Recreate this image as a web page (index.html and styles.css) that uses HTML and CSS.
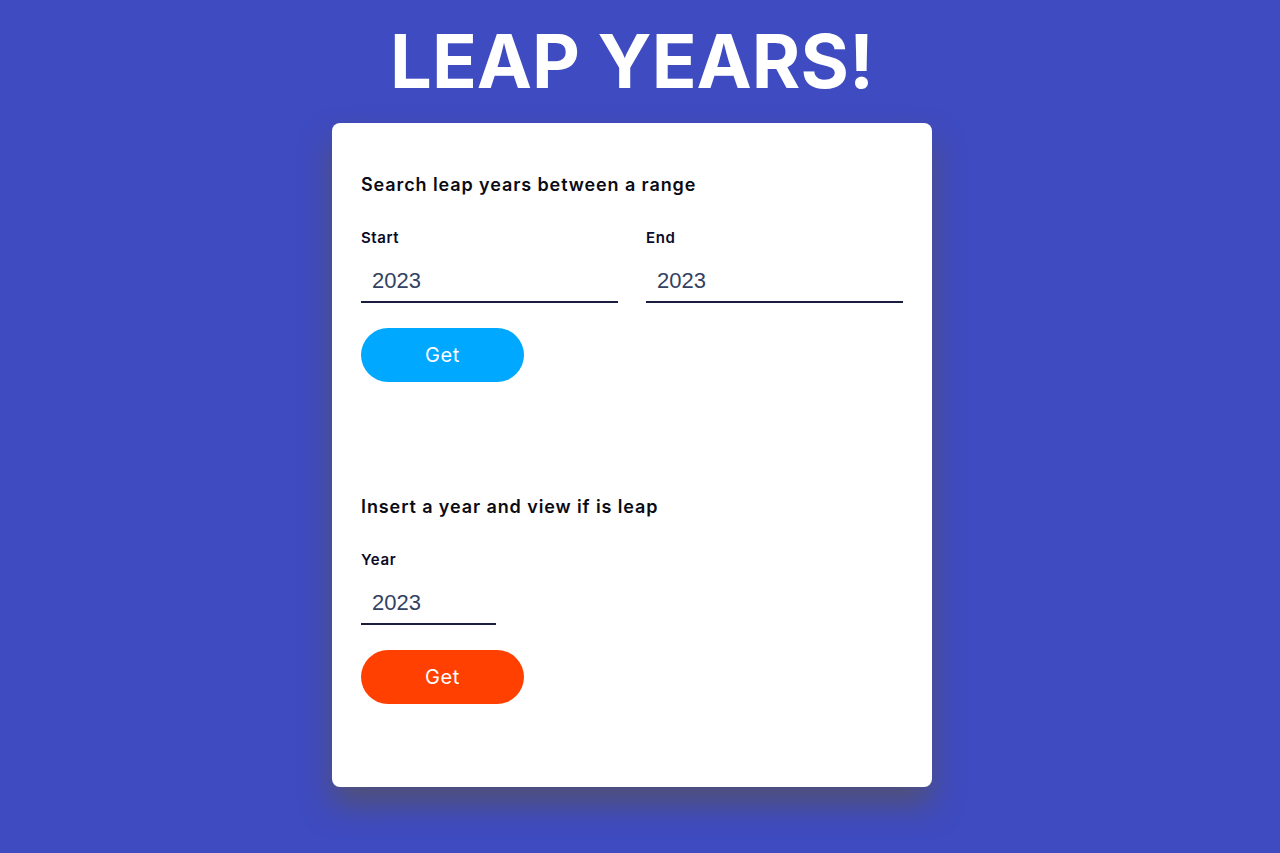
FILE: index.html
```html
<!DOCTYPE html>
<html lang="en">
<head>
<meta charset="utf-8">
<title>Leap Years</title>
<link rel="stylesheet" href="styles.css">
</head>
<body>
<h1 class="title">LEAP YEARS!</h1>
<main class="card">
  <section class="block">
    <h2 class="block-title">Search leap years between a range</h2>
    <div class="row">
      <div class="field">
        <label class="label" for="start">Start</label>
        <input class="input" id="start" type="text" value="2023">
      </div>
      <div class="field">
        <label class="label" for="end">End</label>
        <input class="input" id="end" type="text" value="2023">
      </div>
    </div>
    <button class="btn btn-blue">Get</button>
  </section>
  <section class="block block-second">
    <h2 class="block-title">Insert a year and view if is leap</h2>
    <div class="field field-small">
      <label class="label" for="year">Year</label>
      <input class="input" id="year" type="text" value="2023">
    </div>
    <button class="btn btn-red">Get</button>
  </section>
</main>
</body>
</html>
```
FILE: styles.css
```css
* { box-sizing: border-box; }
html, body { margin: 0; padding: 0; }
body {
  background: #3f4bc0;
  font-family: Inter, "Open Sans", sans-serif;
  min-height: 853px;
  padding-right: 16px;
}
.title {
  margin: 0;
  padding-top: 15px;
  height: 123px;
  text-align: center;
  color: #fff;
  font-size: 74px;
  line-height: 92px;
  font-weight: 700;
  letter-spacing: 0;
}
.card {
  width: 600px;
  margin: 0 auto;
  background: #fff;
  border-radius: 8px;
  padding: 49px 29px 83px;
  box-shadow: 0 18px 30px rgba(95, 85, 60, 0.55);
}
.block-title {
  margin: 0;
  font-size: 18px;
  line-height: 26px;
  font-weight: 600;
  letter-spacing: 0.9px;
  color: #0b0b14;
}
.row {
  display: grid;
  grid-template-columns: 1fr 1fr;
  column-gap: 28px;
}
.field {
  display: flex;
  flex-direction: column;
  margin-top: 29px;
}
.field-small { width: 135px; }
.label {
  font-size: 15px;
  line-height: 22px;
  font-weight: 600;
  letter-spacing: 0.6px;
  color: #0a0a28;
}
.input {
  margin-top: 12px;
  height: 42px;
  border: none;
  border-bottom: 2px solid #1b1d3e;
  padding: 0 11px;
  font-family: "Liberation Sans", Arial, sans-serif;
  font-size: 22px;
  color: #334262;
  outline: none;
  width: 100%;
  background: transparent;
}
.btn {
  display: block;
  margin-top: 25px;
  width: 163px;
  height: 54px;
  border: none;
  border-radius: 27px;
  color: #fff;
  font-family: Inter, "Open Sans", sans-serif;
  font-size: 20px;
  font-weight: 400;
  letter-spacing: 0.6px;
}
.btn-blue { background: #00a8ff; }
.btn-red { background: #ff4000; }
.block-second { margin-top: 112px; }
```
